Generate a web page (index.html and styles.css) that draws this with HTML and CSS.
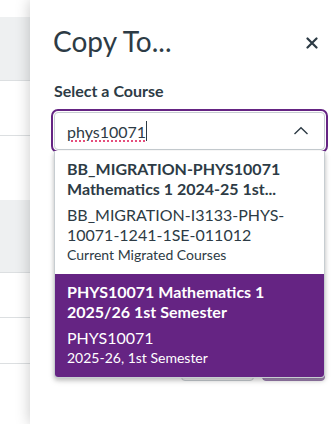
FILE: index.html
```html
<!DOCTYPE html>
<html lang="en">
<head>
    <meta charset="UTF-8">
    <meta name="viewport" content="width=device-width, initial-scale=1.0">
    <title>Copy To...</title>
    <link rel="stylesheet" href="styles.css">
</head>
<body>
    <div class="layout">
        <!-- page behind the tray -->
        <div class="page">
            <div class="row row-top"></div>
            <div class="row row-shade row-a"></div>
            <div class="row row-b"></div>
            <div class="row row-c"></div>
            <div class="row row-shade row-d"></div>
            <div class="row row-e"></div>
            <div class="row row-f"></div>
            <div class="row row-last"></div>
        </div>

        <!-- tray -->
        <aside class="tray">
            <div class="tray-header">
                <h2 class="tray-title">Copy To...</h2>
                <button class="close-btn" aria-label="Close">
                    <svg width="12" height="12" viewBox="0 0 12 12">
                        <path d="M1.5 1.5 L10.5 10.5 M10.5 1.5 L1.5 10.5" stroke="#2d3b45" stroke-width="2.2" stroke-linecap="round"/>
                    </svg>
                </button>
            </div>

            <label class="field-label">Select a Course</label>
            <div class="select">
                <div class="select-input">
                    <span class="typed">phys10071</span><span class="caret"></span>
                    <svg class="chevron" width="16" height="10" viewBox="0 0 16 10">
                        <path d="M1.5 8 L8 1.8 L14.5 8" fill="none" stroke="#2d3b45" stroke-width="1.4"/>
                    </svg>
                </div>

                <ul class="options">
                    <li class="option">
                        <div class="option-title">BB_MIGRATION-PHYS10071 Mathematics 1 2024-25 1st...</div>
                        <div class="option-code">BB_MIGRATION-I3133-PHYS-10071-1241-1SE-011012</div>
                        <div class="option-term">Current Migrated Courses</div>
                    </li>
                    <li class="option selected">
                        <div class="option-title">PHYS10071 Mathematics 1 2025/26 1st Semester</div>
                        <div class="option-code">PHYS10071</div>
                        <div class="option-term">2025-26, 1st Semester</div>
                    </li>
                </ul>
            </div>

            <!-- buttons sit under the open list -->
            <div class="tray-footer">
                <button class="btn btn-secondary" aria-label="Cancel"></button>
                <button class="btn btn-primary" aria-label="Copy"></button>
            </div>
        </aside>
    </div>
</body>
</html>
```

FILE: styles.css
```css
:root {
    --text: #2d3b45;
    --brand: #652483;
    --border: #c7cdd1;
    --row-line: #dcdfe1;
    --row-shade: #eef0f1;
}

* {
    box-sizing: border-box;
}

body {
    margin: 0;
    font-family: 'Lato', 'Noto Sans', sans-serif;
    color: var(--text);
    background: #fff;
    overflow: hidden;
}

.layout {
    display: flex;
    height: 424px;
}

/* Page behind */
.page {
    width: 30px;
    flex-shrink: 0;
    display: flex;
    flex-direction: column;
}

.row {
    border-bottom: 1px solid var(--row-line);
}

.row-shade {
    background: var(--row-shade);
}

.row-top { height: 17px; border-bottom: none; }
.row-a { height: 64px; }
.row-b { height: 55px; }
.row-c { height: 64px; border-bottom: none; }
.row-d { height: 73px; }
.row-e { height: 45px; }
.row-f { height: 46px; }
.row-last { flex: 1; border-bottom: none; }

/* Tray */
.tray {
    flex: 1;
    background: #fff;
    padding: 24px 9px 0 24px;
    box-shadow: 0 0 14px rgba(0, 0, 0, 0.22);
    position: relative;
}

.tray-header {
    display: flex;
    justify-content: space-between;
    align-items: center;
}

.tray-title {
    margin: 0 0 0 -1px;
    font-size: 28px;
    font-weight: 400;
    line-height: 35px;
}

.close-btn {
    background: none;
    border: none;
    padding: 0;
    margin: 2px 0 0 0;
    width: 26px;
    height: 26px;
    display: flex;
    align-items: center;
    justify-content: center;
}

.field-label {
    display: block;
    margin-top: 22px;
    font-size: 16px;
    font-weight: 700;
    line-height: 20px;
}

/* Select */
.select {
    position: relative;
    margin-top: 11px;
}

.select-input {
    height: 38px;
    border: 1px solid var(--border);
    border-radius: 4px;
    outline: 2px solid var(--brand);
    outline-offset: 1px;
    display: flex;
    align-items: center;
    padding: 0 12px;
    font-size: 16px;
}

.typed {
    text-decoration: underline dotted #e0245e;
    text-underline-offset: 3px;
}

.caret {
    width: 1px;
    height: 20px;
    background: var(--text);
}

.chevron {
    margin-left: auto;
    margin-right: 3px;
}

.options {
    position: absolute;
    top: calc(100% + 1px);
    left: 0;
    right: 0;
    margin: 0;
    padding: 0;
    list-style: none;
    background: #fff;
    border: 1px solid var(--border);
    border-top: none;
    border-radius: 0 0 4px 4px;
    box-shadow: 0 3px 6px rgba(0, 0, 0, 0.12), 0 2px 4px rgba(0, 0, 0, 0.18);
    overflow: hidden;
    z-index: 2;
}

.option {
    padding: 8px 12px 10px;
}

.option-title {
    font-size: 16px;
    font-weight: 700;
    line-height: 20px;
}

.option-code {
    margin-top: 6px;
    font-size: 16px;
    line-height: 20px;
}

.option-term {
    margin-top: 1px;
    font-size: 14px;
    line-height: 18px;
}

.option.selected {
    background: var(--brand);
    color: #fff;
}

/* Footer buttons (mostly hidden under the list) */
.tray-footer {
    margin-top: 193px;
    display: flex;
    justify-content: flex-end;
    gap: 8px;
}

.btn {
    height: 38px;
    border-radius: 4px;
    padding: 0;
}

.btn-secondary {
    width: 73px;
    background: #f5f5f5;
    border: 1px solid var(--border);
}

.btn-primary {
    width: 63px;
    background: #a68bb8;
    border: 1px solid #9a7dad;
}
```
